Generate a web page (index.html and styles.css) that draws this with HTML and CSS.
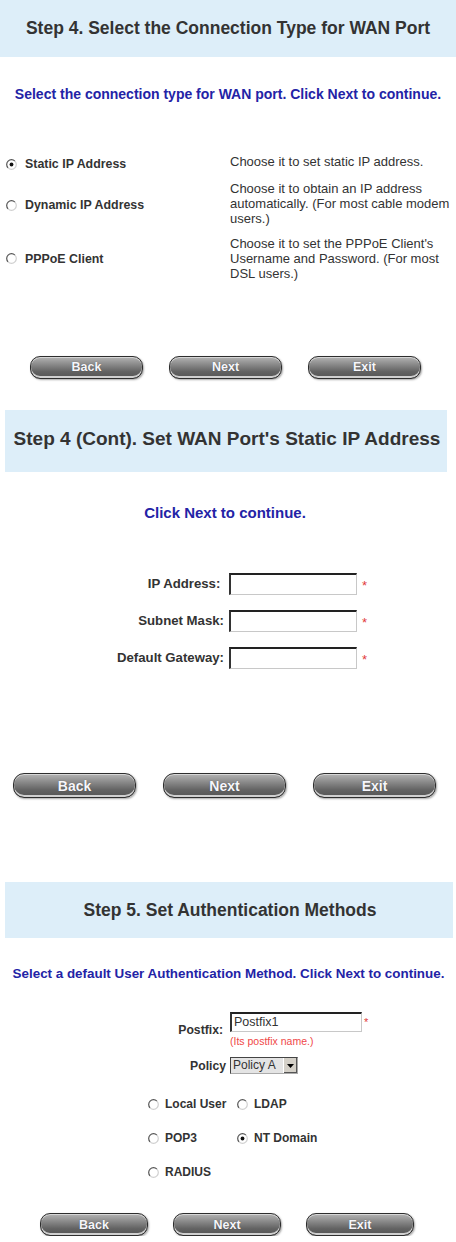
FILE: index.html
```html
<!DOCTYPE html>
<html>
<head>
<meta charset="utf-8">
<link rel="stylesheet" href="styles.css">
</head>
<body>
<section class="s1">
  <div class="band b1"><h1>Step 4. Select the Connection Type for WAN Port</h1></div>
  <p class="sub sub1">Select the connection type for WAN port. Click Next to continue.</p>
  <div class="opts">
    <div class="opt">
      <div class="rl"><svg class="radio" width="11" height="11" viewBox="0 0 11 11"><circle cx="5.5" cy="5.5" r="4.8" fill="#fff"/><path d="M2.1 8.9A4.8 4.8 0 0 1 8.9 2.1" stroke="#555" stroke-width="1.2" fill="none"/><path d="M8.9 2.1A4.8 4.8 0 0 1 2.1 8.9" stroke="#d0d0d0" stroke-width="1.2" fill="none"/><circle cx="5.5" cy="5.5" r="1.9" fill="#111"/></svg>Static IP Address</div>
      <div class="desc">Choose it to set static IP address.</div>
    </div>
    <div class="opt">
      <div class="rl"><svg class="radio" width="11" height="11" viewBox="0 0 11 11"><circle cx="5.5" cy="5.5" r="4.8" fill="#fff"/><path d="M2.1 8.9A4.8 4.8 0 0 1 8.9 2.1" stroke="#555" stroke-width="1.2" fill="none"/><path d="M8.9 2.1A4.8 4.8 0 0 1 2.1 8.9" stroke="#d0d0d0" stroke-width="1.2" fill="none"/></svg>Dynamic IP Address</div>
      <div class="desc">Choose it to obtain an IP address automatically. (For most cable modem users.)</div>
    </div>
    <div class="opt">
      <div class="rl"><svg class="radio" width="11" height="11" viewBox="0 0 11 11"><circle cx="5.5" cy="5.5" r="4.8" fill="#fff"/><path d="M2.1 8.9A4.8 4.8 0 0 1 8.9 2.1" stroke="#555" stroke-width="1.2" fill="none"/><path d="M8.9 2.1A4.8 4.8 0 0 1 2.1 8.9" stroke="#d0d0d0" stroke-width="1.2" fill="none"/></svg>PPPoE Client</div>
      <div class="desc">Choose it to set the PPPoE Client's Username and Password. (For most DSL users.)</div>
    </div>
  </div>
  <div class="btns btns1">
    <span class="btn">Back</span><span class="btn">Next</span><span class="btn">Exit</span>
  </div>
</section>

<section class="s2">
  <div class="band b2"><h1>Step 4 (Cont). Set WAN Port's Static IP Address</h1></div>
  <p class="sub sub2">Click Next to continue.</p>
  <div class="form2">
    <div class="frow"><span class="flabel">IP Address:&nbsp;</span><span class="inp"></span><span class="star">*</span></div>
    <div class="frow"><span class="flabel">Subnet Mask:</span><span class="inp"></span><span class="star">*</span></div>
    <div class="frow"><span class="flabel">Default Gateway:</span><span class="inp"></span><span class="star">*</span></div>
  </div>
  <div class="btns btns2">
    <span class="btn">Back</span><span class="btn">Next</span><span class="btn">Exit</span>
  </div>
</section>

<section class="s3">
  <div class="band b3"><h1>Step 5. Set Authentication Methods</h1></div>
  <p class="sub sub3">Select a default User Authentication Method. Click Next to continue.</p>
  <div class="prow">
    <span class="plabel">Postfix:</span>
    <div class="pfield">
      <div class="pinline"><span class="inp inp3">Postfix1</span><span class="star star3">*</span></div>
      <span class="hint">(Its postfix name.)</span>
    </div>
  </div>
  <div class="prow prow2">
    <span class="plabel">Policy</span>
    <div class="sel"><span class="seltext">Policy A</span><span class="selbtn"><svg width="7" height="4" viewBox="0 0 7 4"><path d="M0 0H7L3.5 4Z" fill="#000"/></svg></span></div>
  </div>
  <div class="rgrid">
    <div class="ritem"><svg class="radio" width="11" height="11" viewBox="0 0 11 11"><circle cx="5.5" cy="5.5" r="4.8" fill="#fff"/><path d="M2.1 8.9A4.8 4.8 0 0 1 8.9 2.1" stroke="#555" stroke-width="1.2" fill="none"/><path d="M8.9 2.1A4.8 4.8 0 0 1 2.1 8.9" stroke="#d0d0d0" stroke-width="1.2" fill="none"/></svg>Local User</div>
    <div class="ritem"><svg class="radio" width="11" height="11" viewBox="0 0 11 11"><circle cx="5.5" cy="5.5" r="4.8" fill="#fff"/><path d="M2.1 8.9A4.8 4.8 0 0 1 8.9 2.1" stroke="#555" stroke-width="1.2" fill="none"/><path d="M8.9 2.1A4.8 4.8 0 0 1 2.1 8.9" stroke="#d0d0d0" stroke-width="1.2" fill="none"/></svg>LDAP</div>
    <div class="ritem"><svg class="radio" width="11" height="11" viewBox="0 0 11 11"><circle cx="5.5" cy="5.5" r="4.8" fill="#fff"/><path d="M2.1 8.9A4.8 4.8 0 0 1 8.9 2.1" stroke="#555" stroke-width="1.2" fill="none"/><path d="M8.9 2.1A4.8 4.8 0 0 1 2.1 8.9" stroke="#d0d0d0" stroke-width="1.2" fill="none"/></svg>POP3</div>
    <div class="ritem"><svg class="radio" width="11" height="11" viewBox="0 0 11 11"><circle cx="5.5" cy="5.5" r="4.8" fill="#fff"/><path d="M2.1 8.9A4.8 4.8 0 0 1 8.9 2.1" stroke="#555" stroke-width="1.2" fill="none"/><path d="M8.9 2.1A4.8 4.8 0 0 1 2.1 8.9" stroke="#d0d0d0" stroke-width="1.2" fill="none"/><circle cx="5.5" cy="5.5" r="1.9" fill="#111"/></svg>NT Domain</div>
    <div class="ritem"><svg class="radio" width="11" height="11" viewBox="0 0 11 11"><circle cx="5.5" cy="5.5" r="4.8" fill="#fff"/><path d="M2.1 8.9A4.8 4.8 0 0 1 8.9 2.1" stroke="#555" stroke-width="1.2" fill="none"/><path d="M8.9 2.1A4.8 4.8 0 0 1 2.1 8.9" stroke="#d0d0d0" stroke-width="1.2" fill="none"/></svg>RADIUS</div>
  </div>
  <div class="btns btns3">
    <span class="btn">Back</span><span class="btn">Next</span><span class="btn">Exit</span>
  </div>
</section>
</body>
</html>
```

FILE: styles.css
```css
* { box-sizing: border-box; }
html, body { margin: 0; padding: 0; }
body {
  width: 456px;
  background: #fff;
  font-family: "Liberation Sans", Arial, sans-serif;
  color: #333;
}
h1, p { margin: 0; }

.band {
  background: #ddeef9;
  display: flex;
  align-items: center;
  justify-content: center;
}
.band h1 {
  font-weight: bold;
  color: #333;
  white-space: nowrap;
  font-size: 17.5px;
  line-height: 20px;
}
.sub {
  color: #2323a6;
  font-weight: bold;
  text-align: center;
  white-space: nowrap;
}

/* Section 1 */
.b1 { height: 57px; padding-bottom: 2px; }
.sub1 { font-size: 14px; line-height: 15px; margin-top: 30px; }
.opts { margin-top: 47px; display: flex; flex-direction: column; }
.opt { display: flex; padding: 5px 0; }
.rl {
  width: 230px;
  display: flex;
  align-items: center;
  padding-left: 6px;
  padding-top: 3px;
  font-size: 12.4px;
  font-weight: bold;
}
.opt:last-child .rl { padding-top: 0; }
.radio { flex: none; margin-right: 8px; }
.desc { width: 224px; font-size: 13px; line-height: 15px; color: #333; }

.btns { display: flex; }
.btn {
  display: flex;
  align-items: center;
  justify-content: center;
  border-radius: 10px;
  border: 1px solid #2e2e2e;
  background: linear-gradient(#b4b4b4 0%, #8a8a8a 35%, #626262 70%, #555 100%);
  box-shadow: inset 0 -2px 0 #cfcfcf, inset 0 1px 0 #d6d6d6, 1px 1px 2px rgba(0,0,0,0.35);
  color: #f6f6fb;
  font-weight: bold;
  text-shadow: 0 0 1px rgba(0,0,0,0.4);
}
.btns1 { margin-top: 70px; padding-left: 30px; gap: 26px; }
.btns1 .btn { width: 113px; height: 23px; font-size: 12.5px; padding-bottom: 1px; }

/* Section 2 */
.s2 { margin: 31px 0 0 5px; width: 442px; }
.b2 { height: 62px; }
.b2 h1 { font-size: 19px; padding-bottom: 4px; padding-left: 2px; }
.sub2 { font-size: 15px; line-height: 18px; margin-top: 32px; padding-right: 2px; }
.form2 { margin-top: 43px; display: flex; flex-direction: column; }
.frow { display: flex; align-items: center; height: 37px; }
.flabel {
  width: 220px;
  text-align: right;
  font-size: 13.2px;
  font-weight: bold;
  padding-right: 1px;
}
.inp {
  display: block;
  width: 128px;
  height: 22px;
  margin-left: 4px;
  background: #fff;
  border-style: solid;
  border-width: 2px 1px 1px 2px;
  border-color: #222 #c8c8c8 #c8c8c8 #333;
}
.star { color: #e23a3a; font-size: 13px; margin-left: 5px; padding-top: 3px; }
.btns2 { margin-top: 97px; padding-left: 8px; gap: 27px; }
.btns2 .btn { width: 123px; height: 25px; font-size: 14px; border-radius: 11px; }

/* Section 3 */
.s3 { margin: 84px 0 0 5px; width: 448px; }
.b3 { height: 56px; }
.b3 h1 { font-size: 17.5px; padding-left: 2px; }
.sub3 { font-size: 13.4px; line-height: 15px; margin-top: 28px; padding-right: 1px; }
.prow { display: flex; align-items: center; margin-top: 31px; }
.plabel {
  width: 225px;
  text-align: right;
  font-size: 12.2px;
  font-weight: bold;
  padding-right: 7px;
}
.pfield { display: flex; flex-direction: column; }
.pinline { display: flex; align-items: flex-start; }
.inp3 {
  width: 132px;
  height: 20px;
  margin-left: 0;
  font-size: 12.5px;
  line-height: 17px;
  padding-left: 2px;
  color: #333;
}
.star3 { margin-left: 2px; padding-top: 3px; font-size: 11px; line-height: 14px; }
.hint { color: #f04848; font-size: 10.5px; line-height: 14px; margin-top: 2px; }
.prow2 { margin-top: 9px; }
.prow2 .plabel { padding-right: 4px; }
.sel {
  display: flex;
  width: 68px;
  height: 17px;
  border-style: solid;
  border-width: 1px;
  border-color: #444 #aaa #aaa #444;
  background: #e4e4e4;
}
.seltext { flex: 1; font-size: 12px; line-height: 15px; padding-left: 2px; color: #333; }
.selbtn {
  width: 14px;
  display: flex;
  align-items: center;
  justify-content: center;
  background: #d4d0c8;
  border-left: 1px solid #fff;
  box-shadow: inset -1px -1px 0 #555;
}
.rgrid {
  margin-top: 13px;
  padding-left: 143px;
  display: grid;
  grid-template-columns: 89px auto;
  grid-auto-rows: 34px;
}
.ritem { display: flex; align-items: center; font-size: 12px; font-weight: bold; }
.ritem .radio { margin-right: 6px; }
.btns3 { margin-top: 24px; padding-left: 35px; gap: 25px; }
.btns3 .btn { width: 108px; height: 23px; font-size: 12.5px; }
```
